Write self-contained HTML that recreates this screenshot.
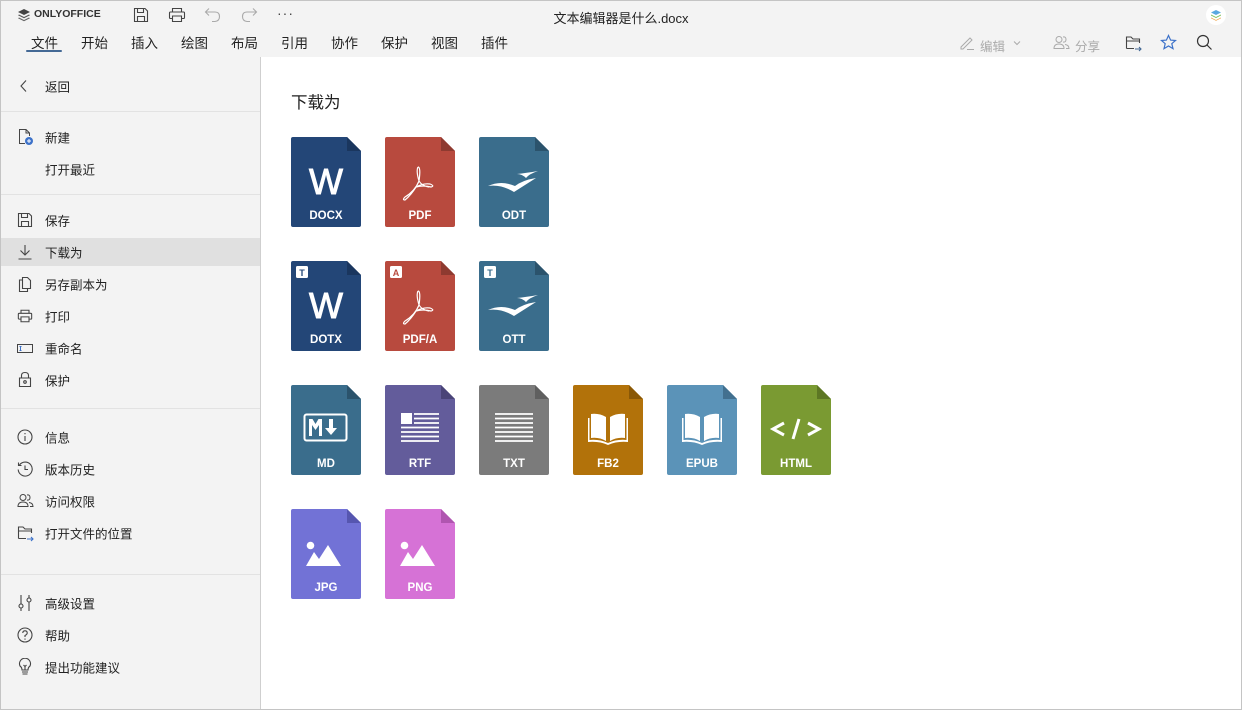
<!DOCTYPE html>
<html><head><meta charset="utf-8"><style>
*{margin:0;padding:0;box-sizing:border-box}
body{width:1242px;height:710px;overflow:hidden;font-family:"Liberation Sans","Noto Sans CJK SC",sans-serif;color:#333;background:#fff;position:relative}
.frame{position:absolute;inset:0;border:1px solid #c4c4c4;pointer-events:none;z-index:9}
.hdr{position:absolute;left:0;top:0;width:1242px;height:57px;background:#f3f3f3}
.side{position:absolute;left:0;top:57px;width:261px;height:653px;background:#f3f3f3;border-right:1px solid #cfcfcf}
.t{position:absolute;font-size:13px;white-space:nowrap}
.tab{position:absolute;top:32px;font-size:13.5px;color:#222}
.it{position:absolute;left:45px;font-size:12.5px;color:#222;transform:translateY(-50%)}
.ic{position:absolute;left:17px}
.sep{position:absolute;left:0;width:260px;height:1px;background:#e2e2e2}
.f{position:absolute}
svg text{font-family:"Liberation Sans",sans-serif}
</style></head><body>
<div class="hdr"></div>
<svg style="position:absolute;left:17px;top:8px" width="14" height="14" viewBox="0 0 14 14"><path d="M7 1L13 4L7 7L1 4Z" fill="#444"/><path d="M2 6.5L7 9L12 6.5L13 7.2L7 10.2L1 7.2Z" fill="#555"/><path d="M2 9.5L7 12L12 9.5L13 10.2L7 13.2L1 10.2Z" fill="#666"/></svg>
<div class="t" style="left:34px;top:8px;font-size:10.5px;font-weight:bold;color:#333">ONLYOFFICE</div>
<svg style="position:absolute;left:133px;top:7px" width="16" height="16" viewBox="0 0 16 16" fill="none" stroke="#444" stroke-width="1.1"><path d="M1.5 1.5H12L14.5 4V14.5H1.5Z"/><path d="M4.5 1.5V5.5H10.5V1.5M4.5 14.5V9.5H11.5V14.5"/></svg>
<svg style="position:absolute;left:168px;top:7px" width="18" height="16" viewBox="0 0 18 16" fill="none" stroke="#444" stroke-width="1.1"><path d="M4.5 5V1.5H13.5V5M4.5 11.5H2.5Q1.5 11.5 1.5 10.5V6Q1.5 5 2.5 5H15.5Q16.5 5 16.5 6V10.5Q16.5 11.5 15.5 11.5H13.5M4.5 9H13.5V14.5H4.5Z"/></svg>
<svg style="position:absolute;left:204px;top:7px" width="18" height="16" viewBox="0 0 18 16" fill="none" stroke="#aaa" stroke-width="1.1"><path d="M5 1.5L1.5 5L5 8.5M1.5 5H11Q15.5 5 15.5 9.5T11 14.5H8"/></svg>
<svg style="position:absolute;left:240px;top:7px" width="18" height="16" viewBox="0 0 18 16" fill="none" stroke="#aaa" stroke-width="1.1"><path d="M13 1.5L16.5 5L13 8.5M16.5 5H7Q2.5 5 2.5 9.5T7 14.5H10"/></svg>
<div class="t" style="left:277px;top:5px;font-size:14px;letter-spacing:1px;color:#444">···</div>
<div class="t" style="left:0;width:1242px;text-align:center;top:8px;color:#222">文本编辑器是什么.docx</div>
<div style="position:absolute;left:1206px;top:5px;width:20px;height:20px;border-radius:50%;background:#fff"></div>
<svg style="position:absolute;left:1210px;top:9px" width="12" height="12" viewBox="0 0 12 12"><path d="M6 1L11 3.5L6 6L1 3.5Z" fill="#5aa8e0"/><path d="M1 5.5L6 8L11 5.5V6.5L6 9L1 6.5Z" fill="#7cc05a"/><path d="M1 8.5L6 11L11 8.5V9.2L6 11.7L1 9.2Z" fill="#f0a040"/></svg>
<div class="tab" style="left:31px">文件</div>
<div style="position:absolute;left:26px;top:50px;width:36px;height:2px;background:#446995;border-radius:1px"></div>
<div class="tab" style="left:81px">开始</div><div class="tab" style="left:131px">插入</div><div class="tab" style="left:181px">绘图</div><div class="tab" style="left:231px">布局</div><div class="tab" style="left:281px">引用</div><div class="tab" style="left:331px">协作</div><div class="tab" style="left:381px">保护</div><div class="tab" style="left:431px">视图</div><div class="tab" style="left:481px">插件</div>
<svg style="position:absolute;left:959px;top:35px" width="16" height="16" viewBox="0 0 16 16" fill="none" stroke="#aaa" stroke-width="1"><path d="M2 12L11 3L13 5L4 14H2ZM8 14.5H15"/></svg>
<div class="t" style="left:980px;top:36px;color:#aaa;font-size:12.5px">编辑</div>
<svg style="position:absolute;left:1013px;top:40px" width="8" height="6" viewBox="0 0 8 6" fill="none" stroke="#aaa"><path d="M1 1.5L4 4.5L7 1.5"/></svg>
<svg style="position:absolute;left:1053px;top:35px" width="17" height="15" viewBox="0 0 17 15" fill="none" stroke="#aaa" stroke-width="1"><circle cx="6" cy="4.5" r="3"/><path d="M1 13.5Q1 9 6 9T11 13.5ZM10 2Q13 1.5 13 4.5T10 7M12 9.5Q16 10 16 13.5H13"/></svg>
<div class="t" style="left:1075px;top:36px;color:#aaa;font-size:12.5px">分享</div>
<svg style="position:absolute;left:1125px;top:35px" width="18" height="17" viewBox="0 0 18 17" fill="none" stroke-width="1.1"><path d="M1.5 13.5V2H6L8 4H14.5V8M1.5 6H14.5M1.5 13.5H9" stroke="#444"/><path d="M10 14H16M14 12L16 14L14 16" stroke="#446995"/></svg>
<svg style="position:absolute;left:1160px;top:34px" width="17" height="17" viewBox="0 0 17 17" fill="none" stroke="#3d72c9" stroke-width="1.2"><path d="M8.5 1.5L10.6 6.1L15.5 6.5L11.8 9.7L13 14.6L8.5 12L4 14.6L5.2 9.7L1.5 6.5L6.4 6.1Z"/></svg>
<svg style="position:absolute;left:1196px;top:34px" width="17" height="17" viewBox="0 0 17 17" fill="none" stroke="#333" stroke-width="1.2"><circle cx="7" cy="7" r="5.5"/><path d="M11 11L15.5 15.5"/></svg>

<div class="side"></div>
<svg class="ic" style="top:79px;left:19px" width="10" height="14" viewBox="0 0 10 14" fill="none" stroke="#444" stroke-width="1.1"><path d="M7 1.5L2 7L7 12.5"/></svg>
<div class="it" style="top:86px">返回</div>
<div class="sep" style="top:111px"></div>
<svg class="ic" style="top:128px" width="18" height="18" viewBox="0 0 18 18" fill="none" stroke="#444" stroke-width="1"><path d="M8 15.5H2.5V1.5H9L12.5 5V8M9 1.5V5H12.5"/><circle cx="12" cy="13" r="4" fill="#3d72c9" stroke="none"/><path d="M12 11V15M10 13H14" stroke="#fff"/></svg>
<div class="it" style="top:137px">新建</div>
<div class="it" style="top:169px">打开最近</div>
<div class="sep" style="top:194px"></div>
<svg class="ic" style="top:212px" width="16" height="16" viewBox="0 0 16 16" fill="none" stroke="#444" stroke-width="1.1"><path d="M1.5 1.5H12L14.5 4V14.5H1.5Z"/><path d="M4.5 1.5V5.5H10.5V1.5M4.5 14.5V9.5H11.5V14.5"/></svg>
<div class="it" style="top:220px">保存</div>
<div style="position:absolute;left:1px;top:238px;width:259px;height:28px;background:#e0e0e0"></div>
<svg class="ic" style="top:244px" width="16" height="16" viewBox="0 0 16 16" fill="none" stroke="#444" stroke-width="1.1"><path d="M8 1V11M3.5 6.5L8 11L12.5 6.5M1.5 15H14.5"/></svg>
<div class="it" style="top:252px">下载为</div>
<svg class="ic" style="top:276px" width="16" height="17" viewBox="0 0 16 17" fill="none" stroke="#444" stroke-width="1.1"><path d="M5.5 1.5H10.5L13.5 4.5V12.5H5.5ZM5.5 4H2.5V15.5H10.5V12.5"/></svg>
<div class="it" style="top:284px">另存副本为</div>
<svg class="ic" style="top:308px" width="16" height="16" viewBox="0 0 18 16" fill="none" stroke="#444" stroke-width="1.2"><path d="M4.5 5V1.5H13.5V5M4.5 11.5H2.5Q1.5 11.5 1.5 10.5V6Q1.5 5 2.5 5H15.5Q16.5 5 16.5 6V10.5Q16.5 11.5 15.5 11.5H13.5M4.5 9H13.5V14.5H4.5Z"/></svg>
<div class="it" style="top:316px">打印</div>
<svg class="ic" style="top:342px" width="16" height="12" viewBox="0 0 16 12" fill="none" stroke="#444" stroke-width="1"><rect x="0.5" y="2.5" width="15" height="8"/><path d="M3.5 4.5V8.5M2.5 4.5H4.5M2.5 8.5H4.5" stroke="#3d72c9"/></svg>
<div class="it" style="top:348px">重命名</div>
<svg class="ic" style="top:371px;left:18px" width="14" height="17" viewBox="0 0 14 17" fill="none" stroke="#444" stroke-width="1.1"><path d="M3.5 7V4.5Q3.5 1.5 7 1.5T10.5 4.5V7M1.5 7H12.5V15.5H1.5Z"/><circle cx="7" cy="11" r="1.3"/></svg>
<div class="it" style="top:380px">保护</div>
<div class="sep" style="top:408px"></div>
<svg class="ic" style="top:429px" width="16" height="16" viewBox="0 0 16 16" fill="none" stroke="#444" stroke-width="1.1"><circle cx="8" cy="8" r="7"/><path d="M8 7V12M8 4V5.3"/></svg>
<div class="it" style="top:437px">信息</div>
<svg class="ic" style="top:461px" width="16" height="16" viewBox="0 0 16 16" fill="none" stroke="#444" stroke-width="1.1"><path d="M2.5 4A7 7 0 1 1 1.2 8.5M1.5 1.5V4.5H4.5M8 4.5V8.5H11"/></svg>
<div class="it" style="top:469px">版本历史</div>
<svg class="ic" style="top:493px" width="17" height="15" viewBox="0 0 17 15" fill="none" stroke="#444" stroke-width="1"><circle cx="6" cy="4.5" r="3"/><path d="M1 13.5Q1 9 6 9T11 13.5ZM10 2Q13 1.5 13 4.5T10 7M12 9.5Q16 10 16 13.5H13"/></svg>
<div class="it" style="top:501px">访问权限</div>
<svg class="ic" style="top:525px" width="18" height="17" viewBox="0 0 18 17" fill="none" stroke-width="1.1"><path d="M1.5 13.5V2H6L8 4H14.5V8M1.5 6H14.5M1.5 13.5H9" stroke="#444"/><path d="M10 14H16M14 12L16 14L14 16" stroke="#3d72c9"/></svg>
<div class="it" style="top:533px">打开文件的位置</div>
<div class="sep" style="top:574px"></div>
<svg class="ic" style="top:594px" width="16" height="18" viewBox="0 0 16 18" fill="none" stroke="#444" stroke-width="1.1"><path d="M4 1V17M12 1V17"/><circle cx="4" cy="12" r="2" fill="#f3f3f3"/><circle cx="12" cy="6" r="2" fill="#f3f3f3"/></svg>
<div class="it" style="top:603px">高级设置</div>
<svg class="ic" style="top:627px" width="16" height="16" viewBox="0 0 16 16" fill="none" stroke="#444" stroke-width="1.1"><circle cx="8" cy="8" r="7"/><path d="M5.8 6Q5.8 3.8 8 3.8T10.2 6Q10.2 7.5 8 8.5V10M8 11.5V12.8"/></svg>
<div class="it" style="top:635px">帮助</div>
<svg class="ic" style="top:658px" width="16" height="18" viewBox="0 0 16 18" fill="none" stroke="#444" stroke-width="1.1"><path d="M5 12Q5 9.5 3 8A5.5 5.5 0 1 1 13 8Q11 9.5 11 12ZM5 14H11M5.5 16H10.5M6.5 7L8 8.5L9.5 7M8 8.5V12"/></svg>
<div class="it" style="top:667px">提出功能建议</div>

<div class="t" style="left:291px;top:89px;font-size:16.5px;color:#222">下载为</div>

<svg class="f" style="left:291px;top:137px" width="70" height="90"><path fill="#234677" d="M2 0H56L70 14V88Q70 90 68 90H2Q0 90 0 88V2Q0 0 2 0Z"/><path fill="#1a365e" d="M56 0L70 14H56Z"/><text x="35" y="57" text-anchor="middle" font-size="36" fill="#fff" stroke="#fff" stroke-width="0.9">W</text><text x="35" y="82" text-anchor="middle" font-size="11.5" font-weight="bold" fill="#fff">DOCX</text></svg>
<svg class="f" style="left:385px;top:137px" width="70" height="90"><path fill="#b84a3e" d="M2 0H56L70 14V88Q70 90 68 90H2Q0 90 0 88V2Q0 0 2 0Z"/><path fill="#8e3a30" d="M56 0L70 14H56Z"/><path fill="none" stroke="#fff" stroke-width="1.2" d="M33 30Q31 34 34 44Q30 54 20 60Q17 63 20 63Q26 58 31 50Q38 48 46 50Q50 49 45 47Q38 46 31 50M33 30Q36 30 34 44Q37 49 44 50"/><text x="35" y="82" text-anchor="middle" font-size="11.5" font-weight="bold" fill="#fff">PDF</text></svg>
<svg class="f" style="left:479px;top:137px" width="70" height="90"><path fill="#3a6d8c" d="M2 0H56L70 14V88Q70 90 68 90H2Q0 90 0 88V2Q0 0 2 0Z"/><path fill="#2b536c" d="M56 0L70 14H56Z"/><path fill="#fff" d="M9 49Q22 43 36 49Q44 43 57 41Q46 48 35 55Q22 47 9 49ZM38 37Q47 36 59 34Q50 37 47 41Q43 37 38 37Z"/><text x="35" y="82" text-anchor="middle" font-size="11.5" font-weight="bold" fill="#fff">ODT</text></svg>
<svg class="f" style="left:291px;top:261px" width="70" height="90"><path fill="#234677" d="M2 0H56L70 14V88Q70 90 68 90H2Q0 90 0 88V2Q0 0 2 0Z"/><path fill="#1a365e" d="M56 0L70 14H56Z"/><rect x="5" y="5" width="12" height="12" rx="1.5" fill="#fff"/><text x="11" y="15" text-anchor="middle" font-size="9" font-weight="bold" fill="#234677">T</text><text x="35" y="57" text-anchor="middle" font-size="36" fill="#fff" stroke="#fff" stroke-width="0.9">W</text><text x="35" y="82" text-anchor="middle" font-size="11.5" font-weight="bold" fill="#fff">DOTX</text></svg>
<svg class="f" style="left:385px;top:261px" width="70" height="90"><path fill="#b84a3e" d="M2 0H56L70 14V88Q70 90 68 90H2Q0 90 0 88V2Q0 0 2 0Z"/><path fill="#8e3a30" d="M56 0L70 14H56Z"/><rect x="5" y="5" width="12" height="12" rx="1.5" fill="#fff"/><text x="11" y="15" text-anchor="middle" font-size="9" font-weight="bold" fill="#b84a3e">A</text><path fill="none" stroke="#fff" stroke-width="1.2" d="M33 30Q31 34 34 44Q30 54 20 60Q17 63 20 63Q26 58 31 50Q38 48 46 50Q50 49 45 47Q38 46 31 50M33 30Q36 30 34 44Q37 49 44 50"/><text x="35" y="82" text-anchor="middle" font-size="11.5" font-weight="bold" fill="#fff">PDF/A</text></svg>
<svg class="f" style="left:479px;top:261px" width="70" height="90"><path fill="#3a6d8c" d="M2 0H56L70 14V88Q70 90 68 90H2Q0 90 0 88V2Q0 0 2 0Z"/><path fill="#2b536c" d="M56 0L70 14H56Z"/><rect x="5" y="5" width="12" height="12" rx="1.5" fill="#fff"/><text x="11" y="15" text-anchor="middle" font-size="9" font-weight="bold" fill="#3a6d8c">T</text><path fill="#fff" d="M9 49Q22 43 36 49Q44 43 57 41Q46 48 35 55Q22 47 9 49ZM38 37Q47 36 59 34Q50 37 47 41Q43 37 38 37Z"/><text x="35" y="82" text-anchor="middle" font-size="11.5" font-weight="bold" fill="#fff">OTT</text></svg>
<svg class="f" style="left:291px;top:385px" width="70" height="90"><path fill="#3a6d8c" d="M2 0H56L70 14V88Q70 90 68 90H2Q0 90 0 88V2Q0 0 2 0Z"/><path fill="#2b536c" d="M56 0L70 14H56Z"/><rect x="13.5" y="29.5" width="42" height="26" rx="2" fill="none" stroke="#fff" stroke-width="2"/><path fill="#fff" d="M18 51V34H21.5L24.5 39L27.5 34H31V51H28V40L24.5 45L21 40V51ZM38 34H42V43H46L40 50L34 43H38Z"/><text x="35" y="82" text-anchor="middle" font-size="11.5" font-weight="bold" fill="#fff">MD</text></svg>
<svg class="f" style="left:385px;top:385px" width="70" height="90"><path fill="#635c9b" d="M2 0H56L70 14V88Q70 90 68 90H2Q0 90 0 88V2Q0 0 2 0Z"/><path fill="#4a4478" d="M56 0L70 14H56Z"/><rect x="16" y="28" width="11" height="11" fill="#fff"/><path stroke="#fff" stroke-width="1.8" d="M29 29H54M29 33.5H54M29 38H54M16 42.5H54M16 47H54M16 51.5H54M16 56H54"/><text x="35" y="82" text-anchor="middle" font-size="11.5" font-weight="bold" fill="#fff">RTF</text></svg>
<svg class="f" style="left:479px;top:385px" width="70" height="90"><path fill="#7b7b7b" d="M2 0H56L70 14V88Q70 90 68 90H2Q0 90 0 88V2Q0 0 2 0Z"/><path fill="#5f5f5f" d="M56 0L70 14H56Z"/><path stroke="#fff" stroke-width="1.8" d="M16 29H54M16 33.5H54M16 38H54M16 42.5H54M16 47H54M16 51.5H54M16 56H54"/><text x="35" y="82" text-anchor="middle" font-size="11.5" font-weight="bold" fill="#fff">TXT</text></svg>
<svg class="f" style="left:573px;top:385px" width="70" height="90"><path fill="#b2720a" d="M2 0H56L70 14V88Q70 90 68 90H2Q0 90 0 88V2Q0 0 2 0Z"/><path fill="#8a5806" d="M56 0L70 14H56Z"/><path fill="#fff" d="M18 29Q26 28 33 32V56Q26 52 18 53ZM37 32Q44 28 52 29V53Q44 52 37 56ZM15 33H16.5V55Q26 54 35 58Q44 54 53.5 55V33H55V57Q44 56 35 60Q26 56 15 57Z"/><text x="35" y="82" text-anchor="middle" font-size="11.5" font-weight="bold" fill="#fff">FB2</text></svg>
<svg class="f" style="left:667px;top:385px" width="70" height="90"><path fill="#5b93b8" d="M2 0H56L70 14V88Q70 90 68 90H2Q0 90 0 88V2Q0 0 2 0Z"/><path fill="#42708f" d="M56 0L70 14H56Z"/><path fill="#fff" d="M18 29Q26 28 33 32V56Q26 52 18 53ZM37 32Q44 28 52 29V53Q44 52 37 56ZM15 33H16.5V55Q26 54 35 58Q44 54 53.5 55V33H55V57Q44 56 35 60Q26 56 15 57Z"/><text x="35" y="82" text-anchor="middle" font-size="11.5" font-weight="bold" fill="#fff">EPUB</text></svg>
<svg class="f" style="left:761px;top:385px" width="70" height="90"><path fill="#7a9a32" d="M2 0H56L70 14V88Q70 90 68 90H2Q0 90 0 88V2Q0 0 2 0Z"/><path fill="#5d7724" d="M56 0L70 14H56Z"/><path fill="none" stroke="#fff" stroke-width="3" d="M23 38L12 44L23 50M38 34L32 54M47 38L58 44L47 50"/><text x="35" y="82" text-anchor="middle" font-size="11.5" font-weight="bold" fill="#fff">HTML</text></svg>
<svg class="f" style="left:291px;top:509px" width="70" height="90"><path fill="#7272d6" d="M2 0H56L70 14V88Q70 90 68 90H2Q0 90 0 88V2Q0 0 2 0Z"/><path fill="#5656b0" d="M56 0L70 14H56Z"/><circle cx="19.5" cy="36.5" r="3.8" fill="#fff"/><path fill="#fff" d="M15 57L23 43L28 50L37 36L50 57Z"/><text x="35" y="82" text-anchor="middle" font-size="11.5" font-weight="bold" fill="#fff">JPG</text></svg>
<svg class="f" style="left:385px;top:509px" width="70" height="90"><path fill="#d672d6" d="M2 0H56L70 14V88Q70 90 68 90H2Q0 90 0 88V2Q0 0 2 0Z"/><path fill="#b055b0" d="M56 0L70 14H56Z"/><circle cx="19.5" cy="36.5" r="3.8" fill="#fff"/><path fill="#fff" d="M15 57L23 43L28 50L37 36L50 57Z"/><text x="35" y="82" text-anchor="middle" font-size="11.5" font-weight="bold" fill="#fff">PNG</text></svg>
<div class="frame"></div>
</body></html>
